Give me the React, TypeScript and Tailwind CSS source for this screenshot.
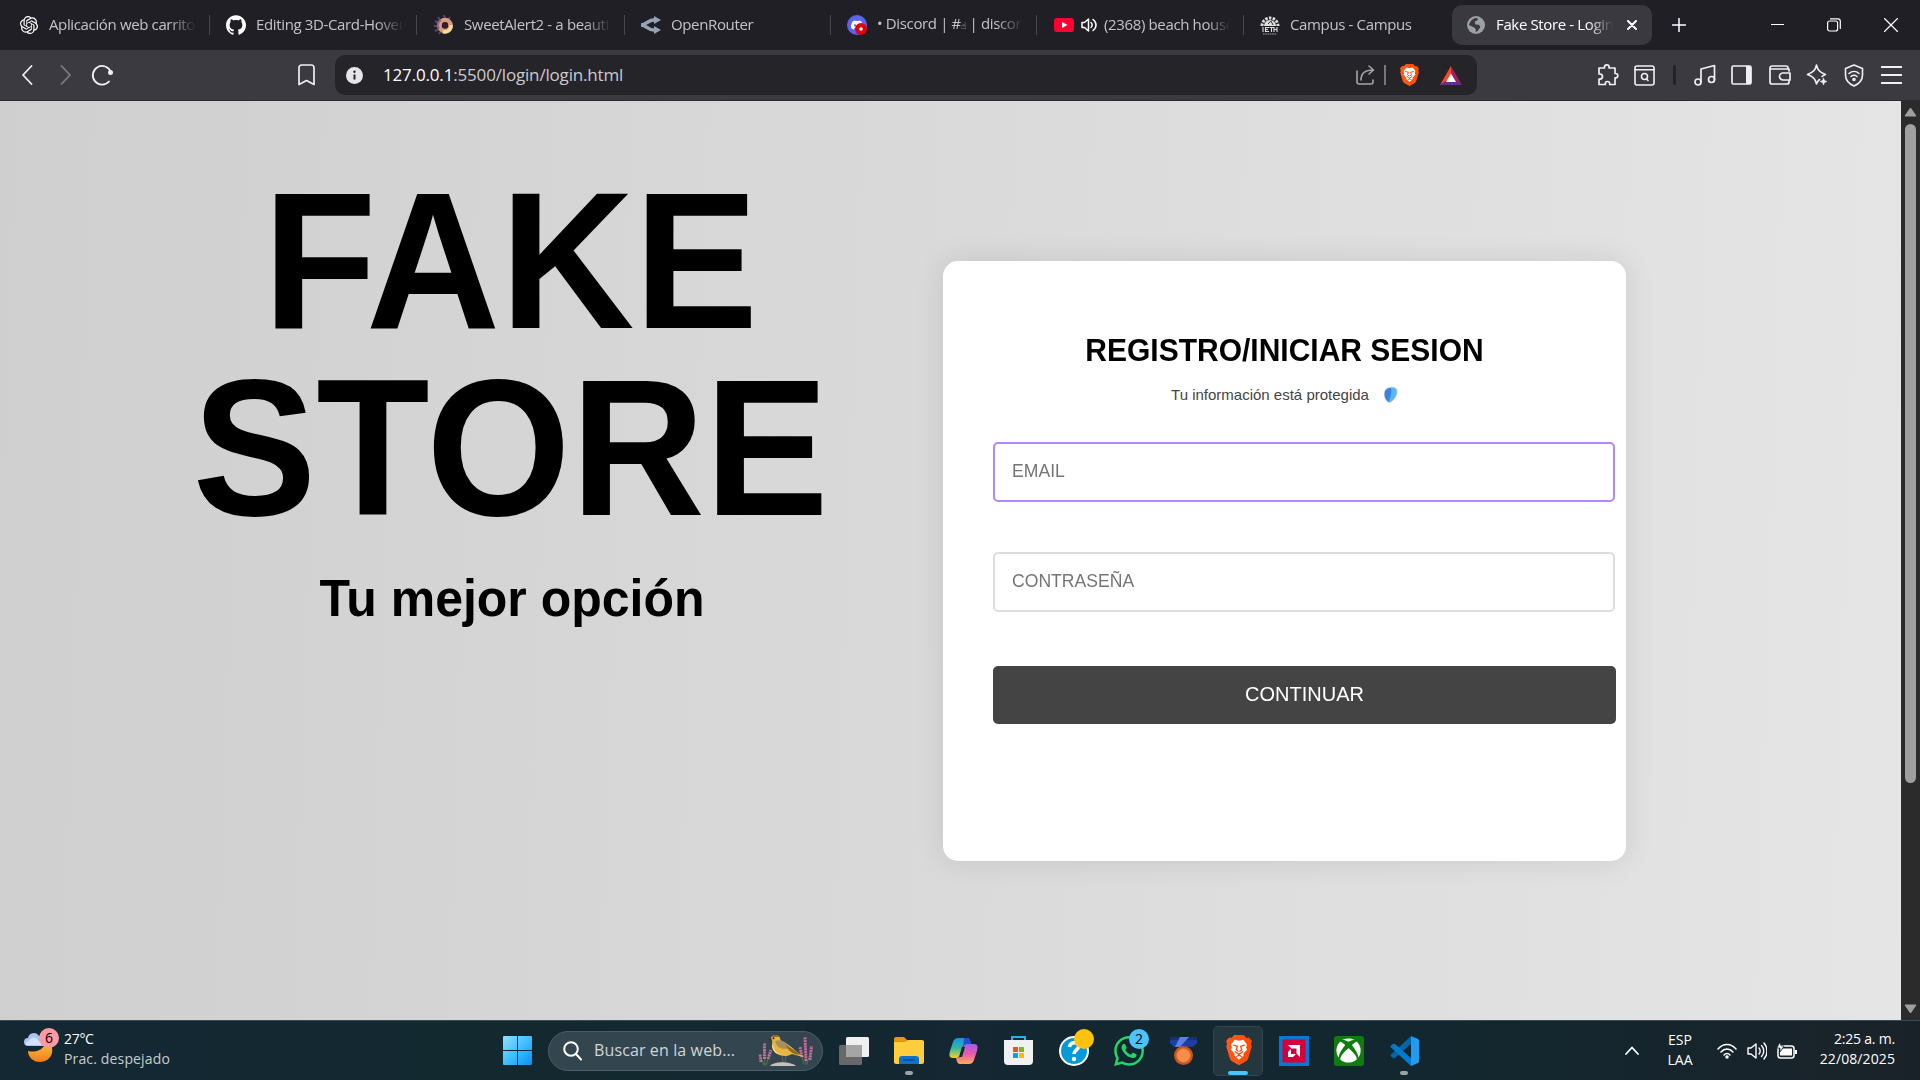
import React from "react";
import { SiOpenai, SiGithub, SiDiscord, SiWhatsapp } from "react-icons/si";
import { FaXbox } from "react-icons/fa";

const stroke = { fill: "none", stroke: "currentColor", strokeLinecap: "round" as const, strokeLinejoin: "round" as const };

function Brave({ size, light = false }: { size: number; light?: boolean }) {
  return (
    <svg width={size} height={size * 1.16} viewBox="0 0 24 28">
      <defs>
        <linearGradient id="braveFill" x1="0" x2="1">
          <stop offset="0" stopColor="#ff5a1f" />
          <stop offset="1" stopColor={light ? "#ff2a00" : "#ff4a00"} />
        </linearGradient>
      </defs>
      <path fill="url(#braveFill)" d="M7.5 0h9l2.5 2.7 2.2-.3L24 5.5l-.9 2.8.7 2.5-3.1 10.5c-.5 1.8-1.8 2.8-3 3.6L12 28l-5.700-3.100c-1.200-.8-2.500-1.800-3-3.600L.2 10.800l.7-2.500L0 5.500l2.800-3.100 2.200.3z" />
      <path fill="#fff" d="M8 4.500l4 .8 4-.8 3.500 4.500-1 2.500 1 2-3.500 4 .3 1.500L12 23l-4.300-4 .3-1.500-3.500-4 1-2-1-2.500z" />
      <path {...stroke} stroke="#ff4a10" strokeWidth="1.200" d="M7 9.500l3 .8M17 9.500l-3 .8M10.500 10.500l-1 3 1.700 1.500M13.500 10.500l1 3-1.700 1.500M8.500 15.500L12 18l3.500-2.500M9.800 20l2.200-1.300 2.200 1.300" />
    </svg>
  );
}

function Tab({ icon, text, w, gap, last, children }: { icon: React.ReactNode; text: React.ReactNode; w: string; gap: string; last?: boolean; children?: React.ReactNode }) {
  return (
    <div className={"flex h-5 items-center " + w}>
      <span className={"flex h-5 w-5 shrink-0 items-center justify-center text-white " + gap}>{icon}</span>
      {children}
      <span className="mb-[2px] min-w-0 flex-1 overflow-hidden whitespace-nowrap text-[15px] leading-5 tracking-[-0.36px] text-[#c4c3c8] [mask-image:linear-gradient(to_right,#000_82%,transparent)]">{text}</span>
      <span className="w-[13px] shrink-0" />
      {!last && <span className="h-5 w-px shrink-0 bg-[#47464c]" />}
    </div>
  );
}

function Tabs() {
  return (
    <div className="flex h-[50px] items-center bg-[#201f25] pl-[19px]">
      <Tab w="w-[191px]" gap="mr-[10px]" text="Aplicación web carrito" icon={<SiOpenai size={18} />} />
      <Tab w="w-[207px] pl-4" gap="mr-[10px]" text="Editing 3D-Card-Hover" icon={<SiGithub size={20} />} />
      <Tab w="w-[208px] pl-[17px]" gap="mr-[10px]" text="SweetAlert2 - a beauti" icon={
        <svg width="20" height="20" viewBox="0 0 20 20">
          <path d="M10 0l1 4M4 2l2 3M1 6l4 2M0 11h4M1 16l4-2M16 2l-2 3M5 19l2-3" stroke="#55476a" strokeWidth="2" />
          <circle cx="11" cy="10.500" r="5.500" fill="none" stroke="#dc9c7c" strokeWidth="4.500" />
          <path d="M17 10a6 6 0 0 1-8 6.500" fill="none" stroke="#ffd89a" strokeWidth="3.500" />
          <path d="M5 14a7 7 0 0 1 2-9" fill="none" stroke="#8a6a86" strokeWidth="2" />
          <circle cx="11" cy="10" r="3" fill="#2d2138" />
        </svg>} />
      <Tab w="w-[206px] pl-4" gap="mr-[10px]" text="OpenRouter" icon={
        <svg width="20" height="18" viewBox="0 0 20 18">
          <path d="M0 9c6 0 6-5.200 14-5.200M0 9c6 0 6 5.200 14 5.200" fill="none" stroke="#94a3b8" strokeWidth="3.600" />
          <path d="M13 0l7 4-7 4zM13 10l7 4-7 4z" fill="#94a3b8" />
        </svg>} />
      <Tab w="w-[206px] pl-4" gap="mr-[10px]" text={<>• Discord | #<span className="font-['DejaVu_Sans'] text-[9px]">{"\u261D\uFE0E"}</span> | discord</>} icon={
        <svg width="20" height="20" viewBox="0 0 20 20">
          <circle cx="10" cy="10" r="10" fill="#5865f2" />
          <g transform="translate(4 4)"><SiDiscord size={12} color="#fff" /></g>
          <circle cx="14" cy="14" r="6" fill="#e0000b" /><circle cx="14" cy="14" r="1.800" fill="#fff" />
        </svg>} />
      <Tab w="w-[207px] pl-[17px]" gap="mr-[7px]" text="(2368) beach house" icon={
        <svg width="20" height="14" viewBox="0 0 20 14"><rect width="20" height="14" rx="3" fill="#ff0033" /><path d="M8 4l5.500 3L8 10z" fill="#fff" /></svg>}>
        <svg className="mr-[7px] shrink-0 text-white" width="16" height="16" viewBox="0 0 16 16" {...stroke} strokeWidth="1.500">
          <path d="M1 5.500h2.500L7.500 2v12l-4-3.500H1zM10 5.500c1.500 1 1.500 4 0 5M12 2.500c4 3 4 8 0 11" />
        </svg>
      </Tab>
      <Tab w="w-[208px] pl-4" gap="mr-[10px]" last text="Campus - Campus" icon={
        <svg width="20" height="20" viewBox="0 0 20 20">
          <path d="M2 11a8 8 0 0 1 16 0" fill="none" stroke="#ddd" strokeWidth="3" strokeDasharray="2.500 1.300" />
          <path d="M4 11a6 6 0 0 1 12 0z" fill="#ddd" /><path d="M8 9l3-3 2 4" stroke="#333" fill="none" />
          <path d="M3 12v5M5.500 12v5M5.500 12.500H9M5.500 14.500h2.500M5.500 16.500H9M9.500 12.500h4M11.500 12.500v4.500M14 12v5M17 12v5M14 14.500h3" stroke="#ddd" strokeWidth="1.100" />
          <path d="M3 19h14" stroke="#aaa" strokeDasharray="1.500 .8" />
        </svg>} />
      <div className="-mt-px flex h-10 w-[200px] items-center rounded-[10px] bg-[#3a393f] pl-[15px]">
        <svg width="18" height="18" viewBox="0 0 19 19">
          <circle cx="9.500" cy="9.500" r="9.500" fill="#9ba0a6" />
          <path d="M9 2c3 0 3 2 1 3L8 6l1 3c2 0 5 0 5 3l-3 4-2 1c1-3 0-4-2-5L2 9.500C3 6 5 3 9 2z" fill="#3a393f" />
        </svg>
        <span className="mb-px ml-[11px] w-[117px] overflow-hidden whitespace-nowrap text-[15px] leading-5 tracking-[-0.36px] text-white [mask-image:linear-gradient(to_right,#000_78%,transparent)]">Fake Store - Login</span>
        <svg className="ml-[14px] text-white" width="10" height="10" viewBox="0 0 10 10" {...stroke} strokeWidth="2"><path d="M1 1l8 8M9 1L1 9" /></svg>
      </div>
      <svg className="ml-5 text-white" width="14" height="14" viewBox="0 0 14 14" {...stroke} strokeWidth="1.500"><path d="M7 .5v13M.5 7h13" /></svg>
      <svg className="ml-[85px] text-white" width="13" height="13" viewBox="0 0 13 13"><path d="M0 5.500h13" stroke="currentColor" /></svg>
      <svg className="ml-[43px] text-white" width="14" height="14" viewBox="0 0 14 14" {...stroke} strokeWidth="1.200"><rect x=".6" y="3" width="10" height="10" rx="2" /><path d="M3.500 .8H11a2.300 2.300 0 0 1 2.300 2.300V10.500" /></svg>
      <svg className="ml-[43px] text-white" width="14" height="14" viewBox="0 0 14 14" {...stroke} strokeWidth="1.200"><path d="M.5 .5l13 13M13.500 .5l-13 13" /></svg>
    </div>
  );
}

function Toolbar() {
  return (
    <div className="flex h-[51px] items-center border-b border-[#2b2a30] bg-[#3b3a40] pl-[21px] text-[#f0eff4]">
      <svg width="12" height="20" viewBox="0 0 12 20" {...stroke} strokeWidth="1.800"><path d="M10.500 1L2 10l8.500 9" /></svg>
      <svg className="ml-[27px] text-[#7d7c82]" width="12" height="20" viewBox="0 0 12 20" {...stroke} strokeWidth="1.800"><path d="M1.500 1L10 10l-8.500 9" /></svg>
      <svg className="ml-[19px]" width="23" height="22" viewBox="0 0 23 22" {...stroke} strokeWidth="1.800"><path d="M18 17.500A9.300 9.300 0 1 1 19.800 8" /><circle cx="19.500" cy="8.500" r="2.500" fill="currentColor" stroke="none" /></svg>
      <svg className="ml-[184px]" width="17" height="22" viewBox="0 0 17 22" {...stroke} strokeWidth="1.700"><path d="M1 3.500A2.500 2.500 0 0 1 3.500 1h10A2.500 2.500 0 0 1 16 3.500V20.500l-7.500-4-7.500 4z" /></svg>
      <div className="ml-5 flex h-10 w-[1142px] items-center rounded-[10px] bg-[#252429] pl-[11px]">
        <svg width="17" height="17" viewBox="0 0 17 17"><circle cx="8.500" cy="8.500" r="8.500" fill="#e6e5ea" /><path d="M8.500 7.500v5" stroke="#252429" strokeWidth="2" /><circle cx="8.500" cy="4.800" r="1.200" fill="#252429" /></svg>
        <span className="mb-px ml-5 w-[300px] whitespace-nowrap text-[17px] tracking-[-0.17px] text-[#cbcad0]"><span className="text-white">127.0.0.1</span>:5500/login/login.html</span>
        <svg className="ml-[673px] text-[#a5a4aa]" width="19" height="20" viewBox="0 0 19 20" {...stroke} strokeWidth="1.600"><path d="M1 6v11a2 2 0 0 0 2 2h12a2 2 0 0 0 2-2v-2M5 15c0-6 3-10 12-10M13 1l4.500 4-4.500 4" /></svg>
        <span className="ml-[9px] h-5 w-[2px] bg-[#77767c]" />
        <span className="ml-[14px]"><Brave size={19} /></span>
        <svg className="ml-[21px]" width="22" height="19" viewBox="0 0 22 19"><path d="M11 0L0 19l11-7z" fill="#ff4724" /><path d="M11 0l11 19-11-7z" fill="#9e1f63" /><path d="M0 19h22l-11-7z" fill="#662d91" /><path d="M11 7.500l5 8.500H6z" fill="#fff" /></svg>
      </div>
      <div className="ml-[120px] flex w-[308px] items-center">
        <svg width="22" height="22" viewBox="0 0 22 22" {...stroke} strokeWidth="1.700"><path d="M2 4h5.500V3.200a2.300 2.300 0 0 1 4.600 0V4H18v5.500h.6a2.200 2.200 0 0 1 0 4.400H18V20.500h-5.300v-.8a2.200 2.200 0 0 0-4.400 0v.8H2v-5.300h.9a2.600 2.600 0 0 0 0-5.200H2z" /></svg>
        <svg className="ml-[15px]" width="21" height="21" viewBox="0 0 21 21" {...stroke} strokeWidth="1.600"><rect x="1" y="1" width="19" height="19" rx="2" /><path d="M1 4.800h19" /><circle cx="10.500" cy="11.500" r="3" /><path d="M12.500 14l1.500 1.500" /></svg>
        <span className="ml-[18px] h-5 w-[3px] rounded bg-[#242328]" />
        <svg className="ml-[18px]" width="22" height="22" viewBox="0 0 22 22" {...stroke} strokeWidth="1.700"><circle cx="4" cy="18" r="3" /><circle cx="17.500" cy="15.500" r="3" /><path d="M7 18V5l13.500-3.500v14" /></svg>
        <svg className="ml-[15px]" width="21" height="20" viewBox="0 0 21 20"><rect x="1" y="1" width="19" height="18" rx="1.500" fill="none" stroke="currentColor" strokeWidth="1.700" /><path d="M15 1h5v18h-5z" fill="currentColor" /></svg>
        <svg className="ml-[17px]" width="22" height="20" viewBox="0 0 22 20" {...stroke} strokeWidth="1.700"><path d="M20 6V4H1V3a2 2 0 0 1 2-2h14a2 2 0 0 1 2 2M1 3v14a2 2 0 0 0 2 2h15a2 2 0 0 0 2-2v-1M21 8h-7a3.500 3.500 0 0 0 0 7h7z" /></svg>
        <svg className="ml-[15px]" width="22" height="22" viewBox="0 0 22 22" {...stroke} strokeWidth="1.600"><path d="M13.500 15.500c-1.500 1-2.300 3-3 4.500-1-4-2-7-9-9.500 7-2.500 8-5.500 9-9.500 1 4 2 7 9 9.500-1.500.6-2.700 1-3.500 2" /><path d="M17.500 14l1 2.500 2.500 1-2.500 1-1 2.500-1-2.500-2.500-1 2.500-1z" fill="currentColor" strokeWidth=".5" /></svg>
        <svg className="ml-[16px]" width="20" height="23" viewBox="0 0 20 23" {...stroke} strokeWidth="1.600"><path d="M10 1l8.500 3.500V11c0 5-4 9-8.500 11-4.500-2-8.500-6-8.500-11V4.500zM5 9.500c3-2.700 7-2.700 10 0M7 12.500c2-1.700 4-1.700 6 0" /><circle cx="10" cy="15.500" r="1" fill="currentColor" /></svg>
        <svg className="ml-[17px]" width="21" height="20" viewBox="0 0 21 20"><path d="M0 2h21M0 10h21M0 18h21" stroke="currentColor" strokeWidth="1.800" /></svg>
      </div>
    </div>
  );
}

function Page() {
  return (
    <div className="flex h-[919px]">
      <div className="flex w-[1901px] bg-[linear-gradient(92deg,#cfcfcf_0%,#e5e5e5_100%)] font-['Liberation_Sans',Arial,sans-serif]">
        <div className="w-[943px] pl-[82px] pt-[66px]">
          <h1 className="w-[857px] scale-x-95 text-center text-[195.4px] font-bold leading-[187px] text-black">FAKE<br />STORE</h1>
          <p className="mt-7 w-[860px] scale-y-104 text-center text-[50px] font-bold leading-[58px] text-black">Tu mejor opción</p>
        </div>
        <div className="mt-40 flex h-[600px] w-[683px] flex-col rounded-[15px] bg-white pl-[50px] pt-[72px] shadow-[0_0_30px_rgba(0,0,0,0.1)]">
          <h2 className="w-[583px] scale-y-104 text-center text-[30px] font-bold leading-9 text-black">REGISTRO/INICIAR SESION</h2>
          <div className="mt-4 flex w-[583px] items-center justify-center">
            <span className="text-[15px] leading-5 text-[#444]">Tu información está protegida</span>
            <svg className="ml-[14px]" width="15" height="16" viewBox="0 0 14 16"><path d="M7 .7C9 0 13 .5 13.300 3.500c.5 5-3 10.500-7.800 12C1.500 13 .5 9 1.200 5 2 2.500 4 1 7 .7z" fill="#55b8fa" stroke="#96aebc" strokeWidth=".7" /><path d="M7.500 1C4 1 2 2.500 1.500 5c-.7 4 .3 7.500 3.500 9.800C7 10 8.500 6 7.500 1z" fill="#3b82e0" /></svg>
          </div>
          <div className="mt-[37px] flex h-[60px] w-[622px] items-center rounded-[5px] border-2 border-[#b388ff] pl-[17px] pb-[2px] text-[#757575]"><span className="scale-y-104 text-[17.6px]">EMAIL</span></div>
          <div className="mt-[50px] flex h-[60px] w-[622px] items-center rounded-[5px] border-2 border-[#dddddd] pl-[17px] pb-[2px] text-[#757575]"><span className="scale-y-104 text-[17.6px]">CONTRASEÑA</span></div>
          <div className="mt-[54px] flex h-[58px] w-[623px] items-center justify-center rounded-[5px] bg-[#444] pb-[2px] text-white"><span className="scale-y-104 text-[20px]">CONTINUAR</span></div>
        </div>
      </div>
      <div className="flex w-[19px] flex-col items-center justify-between bg-[#2b2b2b] py-[6px]">
        <svg width="13" height="10" viewBox="0 0 13 10"><path d="M6.500 1L12 9H1z" fill="#9f9f9f" stroke="#9f9f9f" strokeLinejoin="round" /></svg>
        <div className="-mt-[214px] h-[659px] w-[11px] rounded-full bg-[#9f9f9f]" />
        <svg width="13" height="10" viewBox="0 0 13 10"><path d="M6.500 9L12 1H1z" fill="#9f9f9f" stroke="#9f9f9f" strokeLinejoin="round" /></svg>
      </div>
    </div>
  );
}

function Slot({ children, bar }: { children: React.ReactNode; bar?: boolean }) {
  return (
    <div className="relative flex h-[50px] w-[55px] items-center justify-center">
      {children}
      {bar && <span className="absolute bottom-px h-1 w-2 rounded-full bg-[#9aa3a8]" />}
    </div>
  );
}

function Bird() {
  return (
    <svg width="56" height="32" viewBox="0 0 56 32">
      <g stroke="#4d7a3a" strokeWidth="1" fill="none"><path d="M7 31L6 12M6 30l-4-9M8 30l4-12M48 30L47 8M46 29l-4-14M49 29l4-14" /></g>
      <g stroke="#c76aa3" strokeWidth="3" strokeDasharray="2 .7" fill="none"><path d="M6.500 24V8M3 27l-1-8M10 24l3-9M48 26L47 2M44 22l-2-10M52 25l1.500-14" /></g>
      <path d="M12 31c4-5 20-5 26 0z" fill="#c4c0bb" />
      <path d="M24 20l1 7M28 20l-1 7" stroke="#6f6558" strokeWidth=".9" />
      <path d="M13 3c1-4 8-4 9 0 .4 2 1 3 3 4 6 2 9 6 13 9l8 6-5-1-7-2c-5 3-12 3-17-2-4-4-1-9-4-14z" fill="#e9b440" />
      <path d="M15 6c0 5 0 11 9 14-5 0-10-4-10-9z" fill="#ffdc92" />
      <path d="M17 6c5-2 9 0 12 3 3 2 2 5-2 5-5 0-9-3-10-8z" fill="#a8905c" />
      <path d="M28 10l11 7 5 3c-7 0-14-3-16-10z" fill="#8f6b22" />
      <path d="M13 3l-3 1.500 3 1z" fill="#3e342a" /><path d="M14 2c2-3 6-2 7 0z" fill="#8a6a30" /><circle cx="15.500" cy="3.300" r="1" fill="#2b241c" />
    </svg>
  );
}

function Taskbar() {
  return (
    <div className="flex h-[60px] items-center border-t border-[#3b4b53] bg-[linear-gradient(90deg,#142834_0%,#13292f_28%,#142732_50%,#12272f_75%,#1a2229_100%)] text-white">
      <div className="flex w-[503px] items-center pl-6">
        <div className="relative h-9 w-10">
          <svg width="32" height="32" viewBox="0 0 32 32">
            <defs><linearGradient id="moon" x2="0" y2="1"><stop stopColor="#f9c440" /><stop offset="1" stopColor="#f07c1c" /></linearGradient></defs>
            <path d="M4 18c7 2 16-1 18-9 5 1 7 5 6 11-1 5-6 9-12 9-7 0-12-5-12-11z" fill="url(#moon)" />
            <path d="M4 13a4 4 0 0 1 0-8 6 6 0 0 1 11-2 5 5 0 0 1 4 10z" fill="#a8c6f5" />
            <path d="M2 12a3 3 0 0 1 3-4 5 5 0 0 1 9-1l4 5z" fill="#d3e2fb" />
          </svg>
          <span className="absolute left-[15px] -top-[5px] flex h-5 w-5 items-center justify-center rounded-full bg-[#ff99a4] text-[14px] text-black">6</span>
        </div>
        <div className="-mt-[3px] whitespace-nowrap text-[14px] leading-5"><div className="tracking-[-0.3px]">27°C</div><div className="tracking-[0.15px] text-[#c8cdd0]">Prac. despejado</div></div>
      </div>
      <svg width="29" height="29" viewBox="0 0 29 29"><defs><linearGradient id="win" x2="1" y2="1"><stop stopColor="#8ce0ff" /><stop offset=".5" stopColor="#3fc0ff" /><stop offset="1" stopColor="#0c8ef0" /></linearGradient></defs><path fill="url(#win)" d="M0 1q0-1 1-1h13v14H0zM15 0h13q1 0 1 1v13H15zM0 15h14v14H1q-1 0-1-1zM15 15h14v13q0 1-1 1H15z" /></svg>
      <div className="ml-4 mr-[3px] flex h-10 w-[275px] items-center rounded-full border border-[#4d5c64] bg-[#33454e] pl-[14px]">
        <svg width="19" height="20" viewBox="0 0 19 20" {...stroke} strokeWidth="2"><circle cx="8" cy="8" r="6.800" /><path d="M13 13l5 5.500" /></svg>
        <span className="mb-px ml-[12px] w-[164px] whitespace-nowrap text-[16px] tracking-[0.12px] text-[#d0d6d9]">Buscar en la web...</span>
        <Bird />
      </div>
      <Slot><svg width="30" height="28" viewBox="0 0 30 28"><rect y="8" width="23" height="20" rx="1.500" fill="#686868" /><rect x="7" width="23" height="20" rx="1.500" fill="#f0f0f0" /><path d="M7 8h16v12H7z" fill="#a5a5a5" /></svg></Slot>
      <Slot bar><svg width="30" height="27" viewBox="0 0 30 27"><path d="M0 2q0-2 2-2h8l4 4H30v8H0z" fill="#e09a08" /><path d="M0 5h11l3-2h14q2 0 2 2v20q0 2-2 2H2q-2 0-2-2z" fill="#ffcd3d" /><path d="M5 27v-5q0-3 3-3h14q3 0 3 3v5z" fill="#0f72c8" /><path d="M9 23h12" stroke="#07508f" strokeWidth="1.500" /></svg></Slot>
      <Slot><svg width="29" height="26" viewBox="0 0 29 26"><defs><linearGradient id="ca" x2="0" y2="1"><stop stopColor="#1592e8" /><stop offset=".5" stopColor="#33b7a0" /><stop offset="1" stopColor="#f2d22e" /></linearGradient><linearGradient id="cb" x2="0" y2="1"><stop stopColor="#a35bf0" /><stop offset=".5" stopColor="#ec5aa8" /><stop offset="1" stopColor="#ffae57" /></linearGradient></defs><path d="M9 0h9c2 0 3 2 3.500 4l.5 2h-5c-2 0-3 1-4 4l-2 7c-.6 2-2 3-4 3H4c-4 0-4-3-3-7L4 4c1-3 3-4 5-4z" fill="url(#ca)" /><path d="M15 0h3c2 0 3 2 3.500 4l.5 2h-5c-1 0-2 .5-2.500 1z" fill="#1b4fd8" /><path d="M20 26h-9c-2 0-3-2-3.500-4L7 20c3 0 4-1 5-3l2-7c.6-3 2-4 4-4h7c4 0 4 3 3 7l-3 9c-1 3-3 4-5 4z" fill="url(#cb)" /><path d="M13 9h3l-3 10h-3z" fill="#13272f" /></svg></Slot>
      <Slot><svg width="29" height="29" viewBox="0 0 29 29"><path d="M8 6V1h13v5" fill="none" stroke="#20b4ea" strokeWidth="2" /><path d="M0 4h29v21q0 4-4 4H4q-4 0-4-4z" fill="#f1f1f1" /><path d="M9 11h5v5H9z" fill="#f25022" /><path d="M15 11h5v5h-5z" fill="#7fba00" /><path d="M9 17h5v5H9z" fill="#00a4ef" /><path d="M15 17h5v5h-5z" fill="#ffb900" /></svg></Slot>
      <Slot><svg width="30" height="30" viewBox="0 0 30 30"><circle cx="15" cy="15" r="14" fill="#0a99d8" stroke="#fff" strokeWidth="2" /><path d="M10.500 11c.5-6 10-5.500 9 0-.5 3-4.500 3-4.500 7" fill="none" stroke="#fff" strokeWidth="3.500" /><circle cx="15" cy="23" r="2.200" fill="#fff" /></svg><span className="absolute left-[28px] top-[3px] h-5 w-5 rounded-full bg-[#ffc20e]" /></Slot>
      <Slot><SiWhatsapp size={30} color="#25d366" /><span className="absolute left-[28px] top-[3px] flex h-5 w-5 items-center justify-center rounded-full bg-[#4cc2ff] text-[14px] text-black">2</span></Slot>
      <Slot><svg width="27" height="29" viewBox="0 0 27 29"><path d="M0 1h27v6l-4 4H4L0 7z" fill="#1d3f9e" /><path d="M0 1h27v3H0z" fill="#16307e" /><path d="M10 1h9l-9 10H5z" fill="#5a7fe8" /><circle cx="13.500" cy="19.500" r="9.500" fill="#c9551c" /><circle cx="13.500" cy="19.500" r="7" fill="#f58d4b" stroke="#e06a22" /></svg></Slot>
      <Slot><span className="absolute inset-y-0 left-[2px] w-[50px] rounded-[5px] border border-[#34444b] bg-[#24363e]" /><span className="relative flex"><Brave size={26} light /></span><span className="absolute bottom-px left-[17px] h-1 w-5 rounded-full bg-[#4cc2ff]" /></Slot>
      <Slot><svg width="30" height="30" viewBox="0 0 30 30"><path fill="#0078d7" d="M0 0h30v30H0z" /><path fill="#d4003c" d="M3.500 3.500h23v23h-23z" /><path d="M9 9h12v12l-3.500-3.500v-5h-5zM9 16l3-3v5h5l-3 3H9z" fill="#fff" /></svg></Slot>
      <Slot><span className="flex h-[30px] w-[30px] items-center justify-center rounded-[3px] bg-[#107c10]"><FaXbox size={25} color="#fff" /></span></Slot>
      <Slot bar><svg width="30" height="30" viewBox="0 0 30 30"><path d="M22 0L2 18.500q-1 1 0 2l2 1.500q1 .7 2 0L22 8z" fill="#0065a9" /><path d="M22 30L2 11.500q-1-1 0-2L4 8q1-.7 2 0l16 14z" fill="#007acc" /><path d="M22 0l7 3q1 .5 1 1.500v21q0 1-1 1.500l-7 3z" fill="#1f9cf0" /></svg></Slot>
      <svg className="ml-[194px]" width="14" height="9" viewBox="0 0 14 9" {...stroke} strokeWidth="1.800"><path d="M1 8l6-6.500L13 8" /></svg>
      <div className="-mt-px ml-[21px] w-10 text-center text-[14px] leading-5">ESP<br />LAA</div>
      <svg className="ml-[17px]" width="20" height="16" viewBox="0 0 20 16" {...stroke} strokeWidth="1.500"><path d="M1 6c5-6 13-6 18 0M4 9c3.500-4 8.500-4 12 0M7 12c1.800-2 4.200-2 6 0" /><circle cx="10" cy="14" r="1" fill="currentColor" /></svg>
      <svg className="ml-[10px]" width="20" height="18" viewBox="0 0 20 18" {...stroke} strokeWidth="1.400"><path d="M1 6h3l5-4v14l-5-4H1zM12 6c1.500 1.500 1.500 4.500 0 6M14.500 3.500c3 3 3 8 0 11M17 1c4 4.500 4 11.500 0 16" /></svg>
      <svg className="ml-[10px]" width="20" height="16" viewBox="0 0 20 16"><rect x="1" y="3" width="16" height="12" rx="2.500" fill="none" stroke="white" strokeWidth="1.500" /><path d="M6 5.500h9v7H3V9zM18 7h2v4h-2z" fill="white" /><path d="M3-1L0 5h3v4l4-6H4z" fill="white" stroke="#13272f" strokeWidth=".7" /></svg>
      <div className="-mt-[3px] ml-5 w-[78px] whitespace-nowrap text-right text-[14px] leading-5"><div className="tracking-[-0.2px]">2:25 a. m.</div><div className="tracking-[0.1px]">22/08/2025</div></div>
    </div>
  );
}

export default function App() {
  return (
    <div className="flex h-[1080px] w-[1920px] flex-col overflow-hidden font-['Open_Sans','Noto_Sans',sans-serif]">
      <Tabs />
      <Toolbar />
      <Page />
      <Taskbar />
    </div>
  );
}
